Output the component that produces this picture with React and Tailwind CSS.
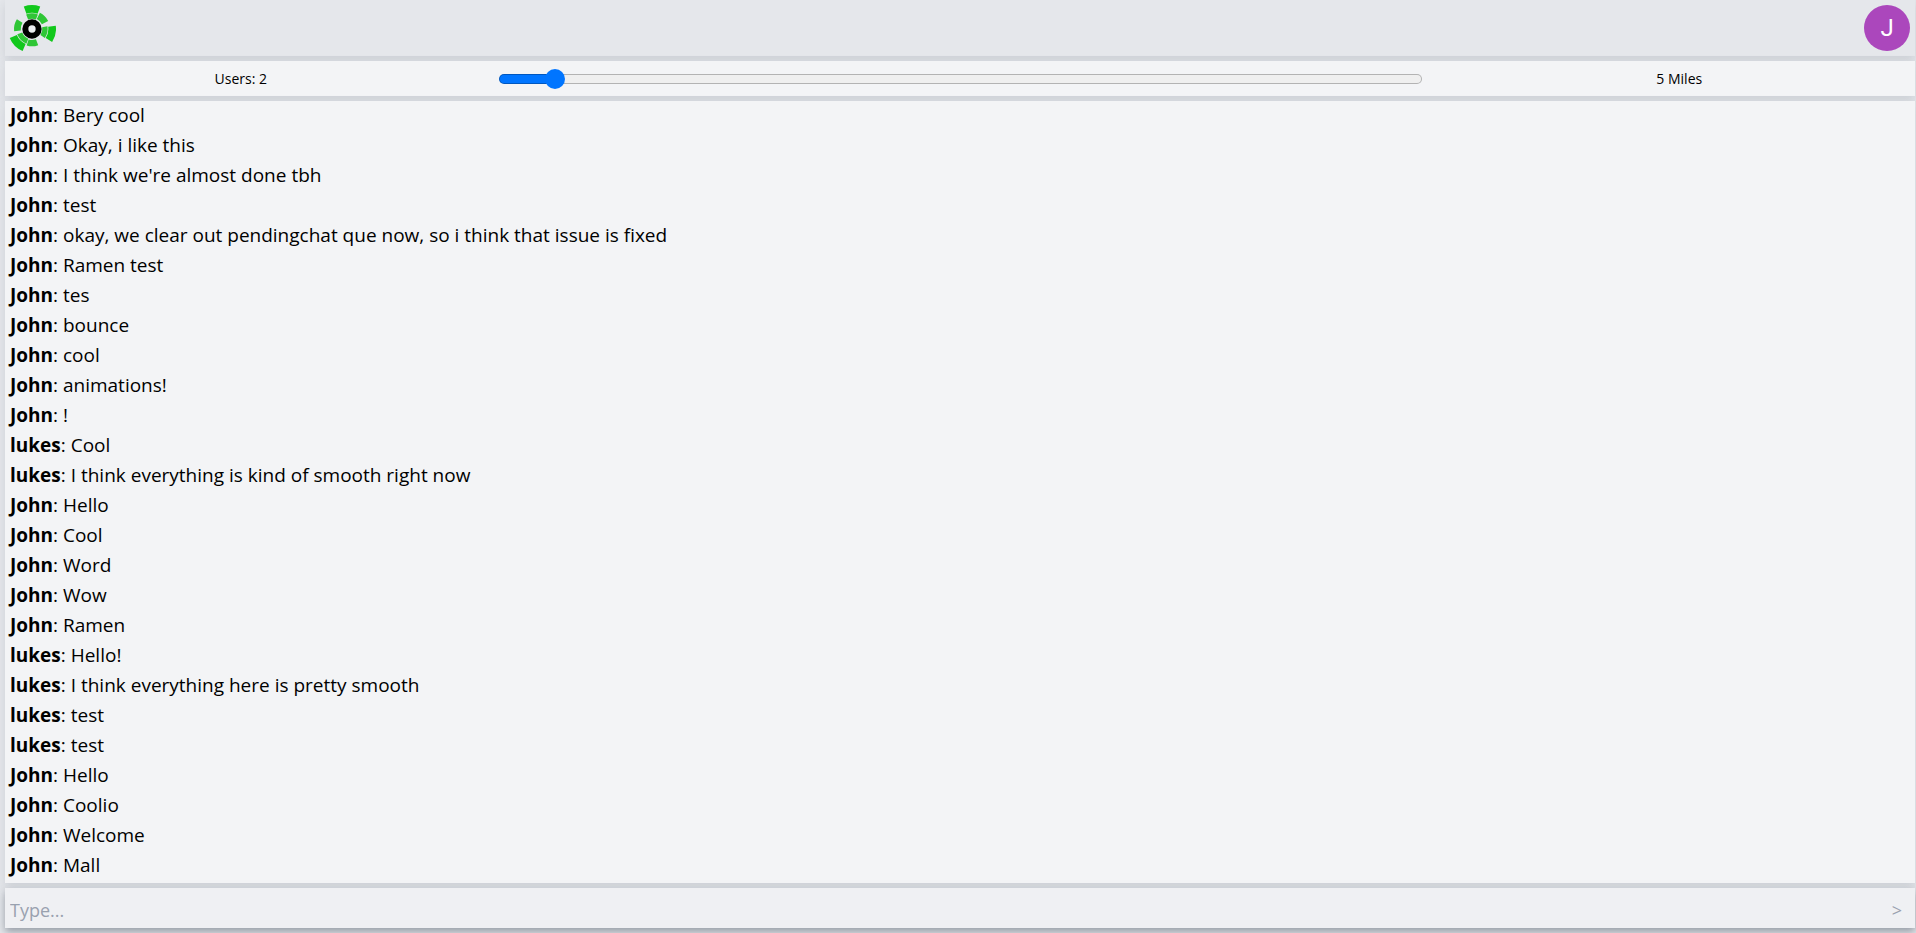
import { useState } from "react";

const messages = [
  ["John", "Bery cool"],
  ["John", "Okay, i like this"],
  ["John", "I think we're almost done tbh"],
  ["John", "test"],
  ["John", "okay, we clear out pendingchat que now, so i think that issue is fixed"],
  ["John", "Ramen test"],
  ["John", "tes"],
  ["John", "bounce"],
  ["John", "cool"],
  ["John", "animations!"],
  ["John", "!"],
  ["lukes", "Cool"],
  ["lukes", "I think everything is kind of smooth right now"],
  ["John", "Hello"],
  ["John", "Cool"],
  ["John", "Word"],
  ["John", "Wow"],
  ["John", "Ramen"],
  ["lukes", "Hello!"],
  ["lukes", "I think everything here is pretty smooth"],
  ["lukes", "test"],
  ["lukes", "test"],
  ["John", "Hello"],
  ["John", "Coolio"],
  ["John", "Welcome"],
  ["John", "Mall"],
];

// Ring segment around the logo centre, angles in degrees clockwise from the right.
function segment(inner, outer, from, to) {
  const at = (r, deg) => {
    const a = (deg * Math.PI) / 180;
    return `${(r * Math.cos(a)).toFixed(2)} ${(r * Math.sin(a)).toFixed(2)}`;
  };
  return `M${at(inner, from)}L${at(outer, from)}A${outer} ${outer} 0 0 1 ${at(outer, to)}L${at(inner, to)}A${inner} ${inner} 0 0 0 ${at(inner, from)}Z`;
}

function Logo() {
  return (
    <svg viewBox="-72 -75 144 144" className="size-12" aria-hidden="true">
      <g fill="#12c81c">
        <path d={segment(49, 72, -110, -70)} />
        <path d={segment(49, 72, -8, 33)} />
        <path d={segment(49, 72, 113, 158)} />
      </g>
      <g fill="#2fc636">
        <path d={segment(31, 47, -112, -68)} />
        <path d={segment(31, 47, -10, 35)} />
        <path d={segment(31, 47, 111, 160)} />
        <path d={segment(33, 54, -64, -26)} />
        <path d={segment(33, 52, 69, 108)} />
        <path d={segment(34, 54, 173, 213)} />
      </g>
      <circle r="20" fill="#eceef1" stroke="#000" strokeWidth="18" />
    </svg>
  );
}

function DistanceSlider({ value, onChange }) {
  const stop = `calc(${value}% + ${10 - value / 5}px)`;
  return (
    <input
      id="distance"
      type="range"
      min="0"
      max="100"
      value={value}
      onChange={(e) => onChange(Number(e.target.value))}
      style={{ backgroundImage: `linear-gradient(to right, #0075ff ${stop}, #efefef ${stop})` }}
      className="col-span-2 mx-3.5 h-2.5 appearance-none rounded-full border border-black/25 bg-origin-border [&::-webkit-slider-thumb]:size-5 [&::-webkit-slider-thumb]:appearance-none [&::-webkit-slider-thumb]:rounded-full [&::-webkit-slider-thumb]:bg-[#0075ff]"
    />
  );
}

export default function App() {
  const [miles, setMiles] = useState(5);
  return (
    <div className="flex h-screen flex-col gap-[5px] bg-gray-200 pr-px pb-[5px] pl-[5px] font-['Segoe_UI','Open_Sans',sans-serif] text-black">
      <header className="flex h-14 shrink-0 items-center justify-between bg-gray-200 pr-[5px] pl-[3px] shadow-[0_4px_10px_rgba(107,114,128,0.2)]">
        <a href="#home" aria-label="Home">
          <Logo />
        </a>
        <button
          type="button"
          aria-label="Account"
          className="flex size-[46px] items-center justify-center rounded-full bg-[#ab47bc] font-[Roboto,sans-serif] text-2xl text-white"
        >
          J
        </button>
      </header>

      <section className="grid h-[35px] shrink-0 grid-cols-4 items-center gap-2 bg-gray-100 text-center text-sm shadow-[0_4px_10px_rgba(107,114,128,0.2)]">
        <span>Users: 2</span>
        <DistanceSlider value={miles} onChange={setMiles} />
        <label htmlFor="distance">{miles} Miles</label>
      </section>

      <main className="flex min-h-0 flex-1 flex-col justify-end overflow-hidden bg-gray-100 px-[5px] pb-[3px] shadow-[0_4px_10px_rgba(107,114,128,0.2)]">
        <ul>
          {messages.map(([name, text], i) => (
            <li key={i} className="text-[19px] leading-[30px]">
              <b>{name}</b>: {text}
            </li>
          ))}
        </ul>
      </main>

      <form
        onSubmit={(e) => e.preventDefault()}
        className="flex h-10 shrink-0 items-center bg-[#eff0f3] px-[5px] pt-[3px] text-lg shadow-[0_4px_8px_rgba(75,85,99,0.5)]"
      >
        <input
          type="text"
          placeholder="Type..."
          aria-label="Message"
          className="h-full min-w-0 flex-1 bg-transparent outline-none placeholder:text-gray-400"
        />
        <button type="submit" aria-label="Send" className="px-2 text-gray-400">
          &gt;
        </button>
      </form>
    </div>
  );
}
